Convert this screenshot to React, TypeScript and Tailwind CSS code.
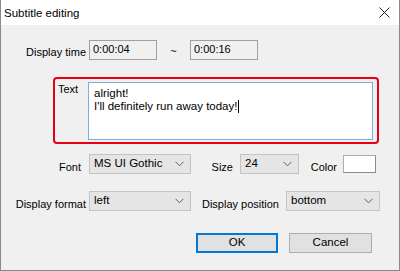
import React from "react";

const font = { fontFamily: '"Liberation Sans", Arial, sans-serif' };

function Chevron() {
  return (
    <svg width="9" height="6" viewBox="0 0 9 6" className="shrink-0">
      <path d="M0.5 0.8 L4.5 4.8 L8.5 0.8" fill="none" stroke="#606060" strokeWidth="1" />
    </svg>
  );
}

function Select({ value, w }: { value: string; w: string }) {
  return (
    <div
      className={`${w} h-[20px] flex items-start justify-between bg-[#e5e5e5] border border-[#c4c4c4] pl-[4px] pr-[6px] pt-[1px]`}
    >
      <span className="text-[11.5px] leading-[14px] text-black">{value}</span>
      <div className="pt-[5px]">
        <Chevron />
      </div>
    </div>
  );
}

export default function App() {
  return (
    <div style={font} className="w-[400px] h-[271px] flex flex-col bg-[#f0f0f0] border-l border-r border-b border-[#8a8a8a] text-black">
      <div className="h-[25px] bg-white flex items-center justify-between pl-[3px] pr-[9px] shrink-0">
        <span className="text-[11.5px] leading-[15px] pt-[1px]">Subtitle editing</span>
        <svg width="11" height="11" viewBox="0 0 11 11">
          <path d="M0.5 0.5 L10.5 10.5 M10.5 0.5 L0.5 10.5" stroke="#222" strokeWidth="1" />
        </svg>
      </div>

      {/* Display time row */}
      <div className="flex items-end h-[20px] mt-[15px]">
        <div className="w-[88px] pr-[3px] text-right text-[11px] leading-[14px] pb-[1px]">Display time</div>
        <div className="w-[68px] h-[20px] border border-[#a0a0a0] bg-[#f0f0f0] pl-[3px] text-[11px] leading-[14px] pt-[1px]">0:00:04</div>
        <div className="w-[33px] text-center text-[11px] leading-[14px] pb-[2px]">~</div>
        <div className="w-[68px] h-[20px] border border-[#a0a0a0] bg-[#f0f0f0] pl-[3px] text-[11px] leading-[14px] pt-[1px]">0:00:16</div>
      </div>

      {/* Text box */}
      <div className="ml-[52px] mt-[17px] w-[326px] border-2 border-[#e60012] rounded-[4px] flex pt-[3px] pb-[2px] pr-[3px]">
        <div className="w-[33px] pl-[3px] text-[11px] leading-[14px]">Text</div>
        <div className="w-[285px] h-[58px] bg-white border border-[#7aaee0] pl-[5px] pt-[4px] text-[11.5px] leading-[13px]">
          <div>alright!</div>
          <div className="flex items-center">
            <span>I'll definitely run away today!</span>
            <span className="inline-block w-[1px] h-[13px] bg-black ml-[1px]" />
          </div>
        </div>
      </div>

      {/* Font row */}
      <div className="flex items-end h-[20px] mt-[10px]">
        <div className="w-[88px] pr-[8px] text-right text-[11px] leading-[14px]">Font</div>
        <Select value="MS UI Gothic" w="w-[102px]" />
        <div className="w-[49px] pr-[7px] text-right text-[11px] leading-[14px]">Size</div>
        <Select value="24" w="w-[59px]" />
        <div className="w-[44px] pr-[6px] text-right text-[11px] leading-[14px]">Color</div>
        <div className="w-[33px] h-[18px] mb-[1px] bg-white border border-[#adadad] border-r-[#8c8c8c] border-b-[#8c8c8c]" />
      </div>

      {/* Display format row */}
      <div className="flex items-end h-[21px] mt-[16px]">
        <div className="w-[88px] pr-[3px] text-right text-[11px] leading-[14px]">Display format</div>
        <Select value="left" w="w-[102px]" />
        <div className="w-[95px] pr-[7px] text-right text-[11px] leading-[14px]">Display position</div>
        <Select value="bottom" w="w-[94px]" />
      </div>

      {/* Buttons */}
      <div className="flex mt-[22px] h-[20px]">
        <div className="w-[195px]" />
        <div className="w-[82px] h-[20px] bg-[#e1e1e1] border-2 border-[#0078d7] flex items-center justify-center text-[11.5px]">OK</div>
        <div className="w-[11px]" />
        <div className="w-[83px] h-[20px] bg-[#e1e1e1] border border-[#adadad] flex items-center justify-center text-[11.5px]">Cancel</div>
      </div>
    </div>
  );
}
